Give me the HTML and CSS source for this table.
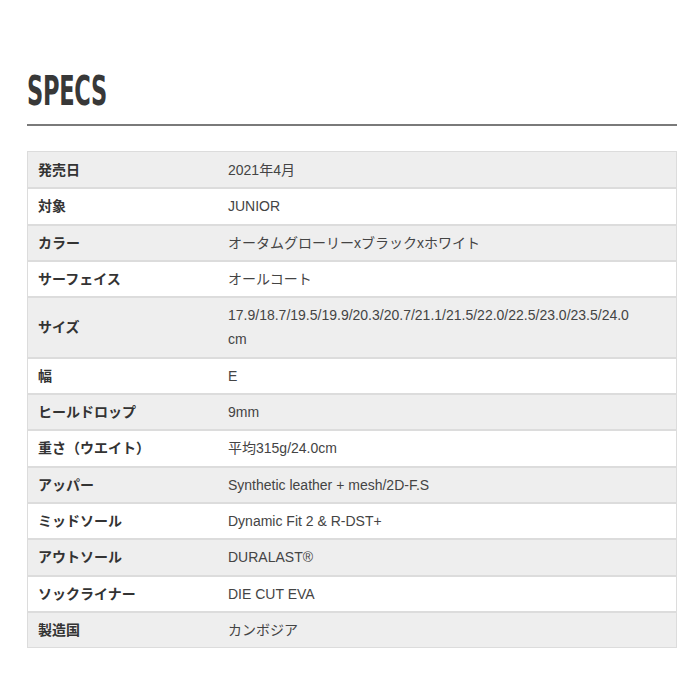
FILE: index.html
```html
<!DOCTYPE html>
<html lang="ja">
<head>
<meta charset="utf-8">
<link rel="stylesheet" href="styles.css">
</head>
<body>
<section class="specs">
  <h2 class="title"><span class="title-text">SPECS</span></h2>
  <table class="spec-table">
    <tr><th>発売日</th><td>2021年4月</td></tr>
    <tr><th>対象</th><td>JUNIOR</td></tr>
    <tr><th>カラー</th><td>オータムグローリーxブラックxホワイト</td></tr>
    <tr><th>サーフェイス</th><td>オールコート</td></tr>
    <tr><th>サイズ</th><td>17.9/18.7/19.5/19.9/20.3/20.7/21.1/21.5/22.0/22.5/23.0/23.5/24.0<br>cm</td></tr>
    <tr><th>幅</th><td>E</td></tr>
    <tr><th>ヒールドロップ</th><td>9mm</td></tr>
    <tr><th>重さ（ウエイト）</th><td>平均315g/24.0cm</td></tr>
    <tr><th>アッパー</th><td>Synthetic leather + mesh/2D-F.S</td></tr>
    <tr><th>ミッドソール</th><td>Dynamic Fit 2 &amp; R-DST+</td></tr>
    <tr><th>アウトソール</th><td>DURALAST®</td></tr>
    <tr><th>ソックライナー</th><td>DIE CUT EVA</td></tr>
    <tr><th>製造国</th><td>カンボジア</td></tr>
  </table>
</section>
</body>
</html>
```
FILE: styles.css
```css
html, body {
  margin: 0;
  padding: 0;
  background: #fff;
}
body {
  font-family: "Liberation Sans", Arial, "Noto Sans CJK JP", sans-serif;
  color: #444;
}
.specs {
  padding: 72px 23px 0 27px;
}
.title {
  margin: 0;
  padding-bottom: 14px;
  border-bottom: 2px solid #7a7a7a;
  font-family: "DejaVu Sans", sans-serif;
  font-weight: bold;
  font-size: 41px;
  line-height: 38px;
  color: #383838;
  height: 38px;
}
.title-text {
  display: inline-block;
  transform: scaleX(0.55);
  transform-origin: left center;
  letter-spacing: -0.5px;
}
.spec-table {
  margin-top: 25px;
  width: 100%;
  border-collapse: collapse;
  border: 1px solid #dcdcdc;
  font-size: 14px;
}
.spec-table tr:nth-child(odd) {
  background: #eeeeee;
}
.spec-table tr:nth-child(even) {
  background: #fff;
}
.spec-table th,
.spec-table td {
  border-top: 2px solid #dcdcdc;
  padding: 5px 10px 5px;
  line-height: 24.3px;
  vertical-align: middle;
  text-align: left;
}
.spec-table tr:first-child th,
.spec-table tr:first-child td {
  border-top: none;
  padding-top: 6px;
}
.spec-table th {
  width: 170px;
  font-weight: bold;
  color: #333;
}
.spec-table td {
  color: #444;
}
```
